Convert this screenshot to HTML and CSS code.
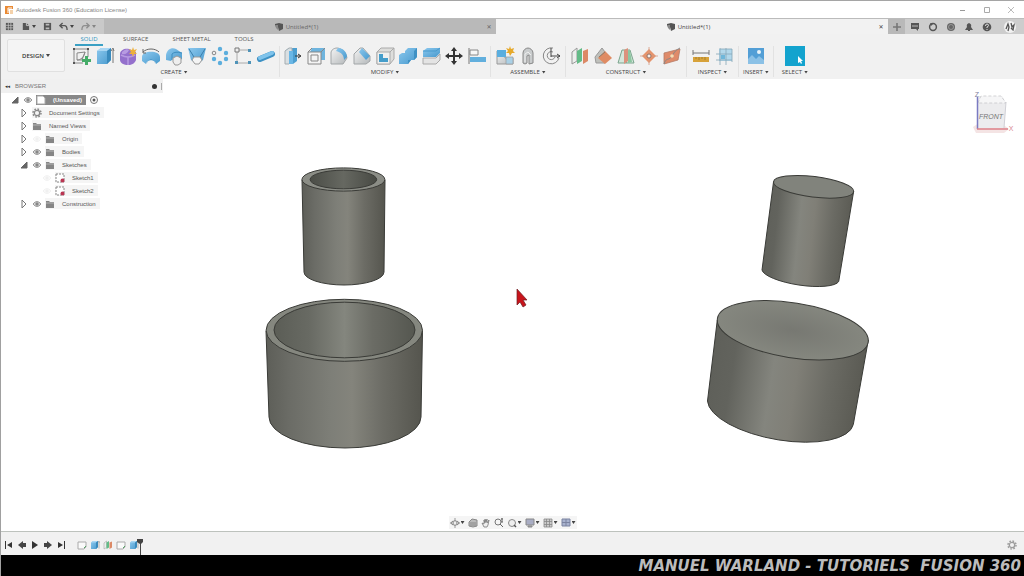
FILE: index.html
```html
<!DOCTYPE html>
<html lang="en">
<head>
<meta charset="utf-8">
<title>Autodesk Fusion 360 (Education License)</title>
<link rel="stylesheet" href="styles.css">
</head>
<body>
<svg class="defs" aria-hidden="true">
  <defs>
    <linearGradient id="blue" x1="0" x2="1" y1="0" y2="1"><stop offset="0" stop-color="#8cc8ee"/><stop offset="1" stop-color="#4799cd"/></linearGradient>
    <linearGradient id="grey" x1="0" x2="1" y1="0" y2="1"><stop offset="0" stop-color="#f4f4f4"/><stop offset="1" stop-color="#b4b8ba"/></linearGradient>
  </defs>
  <symbol id="sketch" viewBox="0 0 20 20"><path d="M2 3h14v8M2 3v14h9M5 14V7l8-1-3 8zM5 14c4 0 7-3 8-8" fill="none" stroke="#888"/><path d="M1 2h2v2H1zM15 2h2v2h-2zM1 16h2v2H1z" fill="#555"/><path d="M13 10h3v3h3v3h-3v3h-3v-3h-3v-3h3z" fill="#45ac68"/></symbol>
  <symbol id="extrude" viewBox="0 0 20 20"><path d="M2 5l4-3h10v12l-4 4H2z" fill="url(#blue)"/><path d="M2 5l4-3h10l-4 3z" fill="#a8d6f3"/><path d="M12 5l4-3v12l-4 4z" fill="#398abd"/><path d="M18 17V4M16 5l2-3 1 3" stroke="#777" fill="none"/></symbol>
  <symbol id="form" viewBox="0 0 20 20"><path d="M2 8c0-4 5-6 9-5l7 3v8c-1 3-4 5-8 5s-8-2-8-5z" fill="#9470cc"/><path d="M3 9q7 4 14 0M10 11v8" fill="none" stroke="#b79be2" stroke-width="1.500"/><path d="M4 6q4-4 7-2-2 5-7 4z" fill="#b79be2"/><path d="M15 1l1 3 3-1-2 3 2 2-3 0-1 3-1-3-3 0 2-2-2-3 3 1z" fill="#edb03b"/></symbol>
  <symbol id="revolve" viewBox="0 0 20 20"><path d="M1 11c0-7 18-7 18 0v4l-4 3c-1-5-9-5-10 0l-4-3z" fill="url(#blue)"/><path d="M5 18q5-9 10 0l-3-4H8z" fill="#3686b8"/><path d="M2 6c4-4 12-4 16 0M2 3v4h3" fill="none" stroke="#666"/></symbol>
  <symbol id="sweep" viewBox="0 0 20 20"><path d="M2 9c1-5 5-8 10-6l6 4v6l-4 2-5-3-2 3-5-1z" fill="url(#blue)"/><path d="M8 8q3-3 10-1M8 8v6" fill="none" stroke="#3d8dbf"/><path d="M9 12l4-2 4 2v5l-3 2h-3l-2-3z" fill="#eee" stroke="#999"/></symbol>
  <symbol id="loft" viewBox="0 0 20 20"><path d="M1 2h18l-3 12-6 4-6-4z" fill="url(#blue)"/><path d="M2 3l5 8M18 3l-5 8" stroke="#397fad"/><path d="M7 11h6l2 3-3 4H8l-3-4z" fill="#f4f4f4" stroke="#999"/></symbol>
  <symbol id="pattern" viewBox="0 0 20 20"><g fill="#5caedd"><circle cx="10" cy="3" r="2.200"/><circle cx="16" cy="7" r="2.200"/><circle cx="16" cy="13" r="2.200"/><circle cx="10" cy="17" r="2.200"/><circle cx="4" cy="13" r="2.200"/></g><circle cx="4" cy="7" r="1.800" fill="#eee" stroke="#888"/></symbol>
  <symbol id="corners" viewBox="0 0 20 20"><path d="M4 4h13M4 4v13h13" fill="none" stroke="#aaa"/><path d="M2 2h4v4H2z" fill="#eee" stroke="#777"/><path d="M15 3h3v3h-3zM15 15h3v3h-3zM2 15h3v3H2z" fill="#4f93b8"/></symbol>
  <symbol id="pipe" viewBox="0 0 20 20"><path d="M4 13L16 8" stroke="#3d91c4" stroke-width="6" stroke-linecap="round"/><path d="M4 12L16 7" stroke="#7fc3eb" stroke-width="4" stroke-linecap="round"/></symbol>
  <symbol id="press" viewBox="0 0 20 20"><path d="M2 5l4-3h8v13l-4 3H2z" fill="#4d9fd0"/><path d="M2 5l4-3h3v13l-3 3H2z" fill="#d9dfe2" stroke="#a5adb1"/><path d="M6 5h4v13H6z" fill="#6ab7e6"/><path d="M12 10h5M15 8l3 2-3 2" stroke="#333" fill="none"/></symbol>
  <symbol id="shell" viewBox="0 0 20 20"><path d="M6 2h13v12h-4V6H4z" fill="#6eb4de"/><path d="M2 6h13v12H2zM5 9h7v6H5z" fill="#f4f4f4" stroke="#888"/><path d="M2 6l4-4M15 6l4-4" stroke="#888"/></symbol>
  <symbol id="fillet" viewBox="0 0 20 20"><path d="M2 7c0-3 3-5 6-5s9 3 10 10l-4 6H2z" fill="url(#grey)" stroke="#a2a6a8"/><path d="M9 2c5 0 9 4 9 9l-3 3c0-5-3-8-8-9z" fill="url(#blue)"/></symbol>
  <symbol id="chamfer" viewBox="0 0 20 20"><path d="M2 8l6-6h3l7 8v5l-4 3H2z" fill="url(#grey)" stroke="#a2a6a8"/><path d="M10 2l8 8-4 4-7-8z" fill="url(#blue)"/></symbol>
  <symbol id="hollow" viewBox="0 0 20 20"><path d="M2 6l4-4h13v11l-4 5H2z" fill="#dededc" stroke="#aaa"/><path d="M2 6h13v12H2zM15 6l4-4" fill="#f0f0ef" stroke="#aaa"/><path d="M4 8h4v4h5v4H4z" fill="#459dca"/></symbol>
  <symbol id="combine" viewBox="0 0 20 20"><path d="M7 5l3-3h9v9l-3 3h-3l-3 4H1V9l3-2h3z" fill="url(#blue)"/><path d="M16 5v9l3-3V2zM10 14h3l-3 4z" fill="#3f91c4"/></symbol>
  <symbol id="split" viewBox="0 0 20 20"><path d="M2 5l4-3h13v5l-4 4H2z" fill="url(#blue)"/><path d="M2 12h13l4-4v6l-4 4H2z" fill="#e4e4e4" stroke="#aaa"/><path d="M2 5h13l4-3" stroke="#4799cd" fill="none"/></symbol>
  <symbol id="move" viewBox="0 0 20 20"><path d="M10 1l3 4h-2v4h4V7l4 3-4 3v-2h-4v4h2l-3 4-3-4h2v-4H5v2l-4-3 4-3v2h4V5H7z" fill="#333"/></symbol>
  <symbol id="align" viewBox="0 0 20 20"><path d="M2 2v16" stroke="#777"/><path d="M3 4h8v5H3z" fill="#f7f7f7" stroke="#888"/><path d="M3 11h16v5H3z" fill="#62afdd"/></symbol>
  <symbol id="component" viewBox="0 0 20 20"><path d="M2 5h8v7h8v6H2z" fill="url(#grey)" stroke="#999"/><path d="M2 4h9v7H2z" fill="#5aaedf"/><path d="M11 11h7v7h-7z" fill="#a9d0e6" stroke="#999" stroke-width=".7"/><path d="M15 0l1 3 3-1-1 3 2 2-3 0-2 3-1-3-3 0 2-2-2-3 3 1z" fill="#e6a92b"/></symbol>
  <symbol id="joint" viewBox="0 0 20 20"><path d="M5 17V7c0-3 3-5 5-5s5 2 5 5v10l-4 1V9l-2 1v7l-2 1z" fill="#c9cccd" stroke="#888"/><path d="M7 16V8l3-2 3 3" fill="none" stroke="#eee"/></symbol>
  <symbol id="joinorigin" viewBox="0 0 20 20"><path d="M12 2A8 8 0 1 0 18 12M12 6A4 4 0 1 0 14 11" fill="none" stroke="#888"/><path d="M10 10h9M10 2v9M16 8l3 2-3 2" fill="none" stroke="#444"/></symbol>
  <symbol id="offset" viewBox="0 0 20 20"><path d="M2 6l5-4v13l-5 3z" fill="#ecefed" stroke="#999"/><path d="M7 5l5-3v13l-5 3z" fill="#63bb87"/><path d="M13 5l5-2v12l-5 3z" fill="#dc8966"/></symbol>
  <symbol id="angle" viewBox="0 0 20 20"><path d="M2 11L9 2l3 4v11H3z" fill="#bfc0bb" stroke="#999"/><path d="M12 5l7 7-7 6-7-6z" fill="#df8b63"/><path d="M6 11l6-5" stroke="#8b7b6a"/></symbol>
  <symbol id="midplane" viewBox="0 0 20 20"><path d="M2 17L6 4h4v13zM18 17L14 4h-4v13z" fill="#d5e7db" stroke="#7ba58e"/><path d="M8 4l4-2v13l-4 3z" fill="#dc927d"/><path d="M12 4l2 1 2 11-4 1z" fill="#8cc7a1"/></symbol>
  <symbol id="point" viewBox="0 0 20 20"><path d="M10 3l7 7-7 7-7-7z" fill="#e5936c"/><path d="M10 1v18M1 10h18" stroke="#d69a80" stroke-width=".8"/><circle cx="10" cy="10" r="2" fill="#f7eee9" stroke="#7c625a" stroke-width=".8"/></symbol>
  <symbol id="pathplane" viewBox="0 0 20 20"><path d="M2 7l16-4-2 11-14 4z" fill="#df8b6a" stroke="#b57b66" stroke-width=".8"/><path d="M2 18c2-7 5-3 8-8s4-6 8-8" fill="none" stroke="#888"/><circle cx="10" cy="10" r="1.800" fill="#f4ddb4"/></symbol>
  <symbol id="measure" viewBox="0 0 20 20"><path d="M2 11h16v5H2z" fill="#d7a23a"/><path d="M2 4v5M18 4v5M2 7h16" fill="none" stroke="#777"/><path d="M5 11v2M8 11v3M11 11v2M14 11v3" stroke="#a67e2c"/></symbol>
  <symbol id="interference" viewBox="0 0 20 20"><path d="M5 3h13v12H5z" fill="#b2d8eb"/><path d="M2 8h16M2 14h16M6 2v17M12 2v17M6 3h12v13" fill="none" stroke="#86a7b7" stroke-width=".8"/><path d="M7 9h4v4H7z" fill="#6fb7da"/></symbol>
  <symbol id="image" viewBox="0 0 20 20"><path d="M2 2h16v16H2z" fill="#539fd6"/><path d="M2 13l4-4 4 4 3-3 5 4v4H2z" fill="#8bc1e6"/><circle cx="13" cy="6" r="2" fill="#e9f4fa"/></symbol>
  <symbol id="select" viewBox="0 0 20 20"><path d="M0 0h20v20H0z" fill="#13a3ce"/><path d="M13 10v7l2-1 1 2 1-1-1-2h2z" fill="#fff"/></symbol>
  <symbol id="folder" viewBox="0 0 10 10"><path d="M1 2h3l1 1h4v6H1z" fill="#858585"/><path d="M1 4h8" stroke="#b5b5b5"/></symbol>
  <symbol id="eye" viewBox="0 0 10 10"><path d="M1 5q4-5 8 0-4 5-8 0z" fill="#ddd" stroke="#999"/><circle cx="5" cy="5" r="1.700" fill="#888"/></symbol>
  <symbol id="gear" viewBox="0 0 10 10"><circle cx="5" cy="5" r="4" fill="none" stroke="#888" stroke-dasharray="1.600 1.540" stroke-width="1.500"/><circle cx="5" cy="5" r="2.700" fill="none" stroke="#888" stroke-width="1.300"/></symbol>
  <symbol id="closed" viewBox="0 0 10 10"><path d="M3 1l4 4-4 4z" fill="#fff" stroke="#777"/></symbol>
  <symbol id="open" viewBox="0 0 10 10"><path d="M2 8l6-6v6z" fill="#666" stroke="#666"/></symbol>
  <symbol id="sketchitem" viewBox="0 0 10 10"><path d="M1 1h8v8H1z" fill="#fff" stroke="#888" stroke-dasharray="2 1"/><circle cx="7.500" cy="7.500" r="2" fill="#ba3653"/></symbol>
  <symbol id="cube" viewBox="0 0 10 10"><path d="M1 2l4-1 4 1v5L5 9 4 5 1 4z" fill="#555"/><path d="M1 3h3v5L2 6z" fill="#888"/></symbol>
  <symbol id="sketchbox" viewBox="0 0 10 10"><path d="M1 2h8v5L7 9H1z" fill="#fafafa" stroke="#aaa"/><path d="M7 8l2-2" stroke="#57a668"/></symbol>
</svg>

<div class="app">
  <header class="title">
    <svg class="ic10" viewBox="0 0 10 10"><path d="M1 1h8v3H5v5H1z" fill="#e98a35"/><path d="M4 3h4M4 3v5M4 5h3" stroke="#fff"/><path d="M6 5h3v4H6z" fill="#f4d1aa"/></svg>
    <span class="title-text">Autodesk Fusion 360 (Education License)</span>
    <button class="win" aria-label="Minimize"><svg class="ic10" viewBox="0 0 10 10"><path d="M2 5.500h5" stroke="#999"/></svg></button>
    <button class="win" aria-label="Maximize"><svg class="ic10" viewBox="0 0 10 10"><path d="M2.500 2.500h5v5h-5z" fill="none" stroke="#aaa"/></svg></button>
    <button class="win" aria-label="Close window"><svg class="ic10" viewBox="0 0 10 10"><path d="M2 2l6 6M8 2L2 8" stroke="#aaa" stroke-width=".8"/></svg></button>
  </header>

  <div class="tabs">
    <div class="quick">
      <button aria-label="Data panel"><svg class="ic10" viewBox="0 0 10 10"><path d="M1 1h8v8H1z" fill="#555"/><path d="M3.700 1v8M6.500 1v8M1 3.700h8M1 6.500h8" stroke="#c9c9c9" stroke-width=".8"/></svg></button>
      <button aria-label="File"><svg class="ic10" viewBox="0 0 10 10"><path d="M2 1h4l3 3v5H2z" fill="#555"/><path d="M6 1v3h3" stroke="#ccc" fill="none"/></svg><i class="caret"></i></button>
      <button aria-label="Save"><svg class="ic10" viewBox="0 0 10 10"><path d="M1 1h8v8H1z" fill="#555"/><path d="M3 2h4v2H3zM3 6h4v2H3z" fill="#bbb"/></svg></button>
      <button aria-label="Undo"><svg class="ic10" viewBox="0 0 10 10"><path d="M4 1L1 4l3 3M1 4h5q3 0 3 5" fill="none" stroke="#555" stroke-width="1.500"/></svg><i class="caret"></i></button>
      <button class="off" aria-label="Redo"><svg class="ic10" viewBox="0 0 10 10"><path d="M6 1l3 3-3 3M9 4H4Q1 4 1 9" fill="none" stroke="#555" stroke-width="1.500"/></svg><i class="caret"></i></button>
    </div>
    <div class="tab"><button class="tab-name"><svg class="ic10"><use href="#cube"/></svg>Untitled*(1)</button><button class="close" aria-label="Close tab">✕</button></div>
    <div class="tab active"><button class="tab-name"><svg class="ic10"><use href="#cube"/></svg>Untitled*(1)</button><button class="close" aria-label="Close tab">✕</button></div>
    <button class="plus" aria-label="New design"><svg class="ic10" viewBox="0 0 10 10"><path d="M5 1v8M1 5h8" stroke="#777" stroke-width="1.600"/></svg></button>
    <div class="status">
      <button aria-label="Extensions"><svg class="ic10" viewBox="0 0 10 10"><path d="M1 1h8v6H8v2L6 7H1z" fill="#555"/><path d="M2 4h6" stroke="#bbb"/></svg></button>
      <button aria-label="Updates"><svg class="ic10" viewBox="0 0 10 10"><circle cx="5" cy="5" r="3.400" fill="none" stroke="#555" stroke-width="1.500"/><path d="M2 1l3 1-2 2z" fill="#555"/></svg></button>
      <button aria-label="Job status"><svg class="ic10" viewBox="0 0 10 10"><circle cx="5" cy="5" r="4" fill="#666"/><circle cx="5" cy="5" r="2.500" fill="none" stroke="#aaa" stroke-width=".7"/></svg></button>
      <button aria-label="Notifications"><svg class="ic10" viewBox="0 0 10 10"><path d="M5 1q3 1 2 4l2 3H1l2-3Q2 2 5 1zM4 8h2v1H4z" fill="#555"/></svg></button>
      <button aria-label="Help"><svg class="ic10" viewBox="0 0 10 10"><circle cx="5" cy="5" r="4.300" fill="#555"/><path d="M3.500 4q0-2 1.500-2t1.500 1.500Q6.500 4.500 5 5v1M5 7v1" fill="none" stroke="#ddd"/></svg></button>
      <button class="avatar" aria-label="Account"><svg class="ic12" viewBox="0 0 12 12"><circle cx="6" cy="6" r="6" fill="#f2f2f2"/><path d="M2 8l2-5 1 3-1 4M7 2l1 4 2-2-1 5-2-2" stroke="#555" fill="none" stroke-width="1.300"/></svg></button>
    </div>
  </div>

  <div class="toolbar">
    <button class="workspace">DESIGN<i class="caret"></i></button>
    <div class="ribbon">
      <nav class="modes"><button class="on">SOLID</button><button>SURFACE</button><button>SHEET METAL</button><button>TOOLS</button></nav>
      <div class="groups">
        <section class="group wide"><div class="icons">
          <button aria-label="Create sketch"><svg><use href="#sketch"/></svg></button><button aria-label="Extrude"><svg><use href="#extrude"/></svg></button><button aria-label="Create form"><svg><use href="#form"/></svg></button><button aria-label="Revolve"><svg><use href="#revolve"/></svg></button><button aria-label="Sweep"><svg><use href="#sweep"/></svg></button><button aria-label="Loft"><svg><use href="#loft"/></svg></button><button aria-label="Circular pattern"><svg><use href="#pattern"/></svg></button><button aria-label="Rectangular pattern"><svg><use href="#corners"/></svg></button><button aria-label="Pipe"><svg><use href="#pipe"/></svg></button>
        </div><button class="menu">CREATE<i class="caret"></i></button></section>
        <section class="group wide"><div class="icons">
          <button aria-label="Press pull"><svg><use href="#press"/></svg></button><button aria-label="Offset face"><svg><use href="#shell"/></svg></button><button aria-label="Fillet"><svg><use href="#fillet"/></svg></button><button aria-label="Chamfer"><svg><use href="#chamfer"/></svg></button><button aria-label="Shell"><svg><use href="#hollow"/></svg></button><button aria-label="Combine"><svg><use href="#combine"/></svg></button><button aria-label="Split body"><svg><use href="#split"/></svg></button><button aria-label="Move"><svg><use href="#move"/></svg></button><button aria-label="Align"><svg><use href="#align"/></svg></button>
        </div><button class="menu">MODIFY<i class="caret"></i></button></section>
        <section class="group"><div class="icons">
          <button aria-label="New component"><svg><use href="#component"/></svg></button><button aria-label="Joint"><svg><use href="#joint"/></svg></button><button aria-label="Joint origin"><svg><use href="#joinorigin"/></svg></button>
        </div><button class="menu">ASSEMBLE<i class="caret"></i></button></section>
        <section class="group"><div class="icons">
          <button aria-label="Offset plane"><svg><use href="#offset"/></svg></button><button aria-label="Plane at angle"><svg><use href="#angle"/></svg></button><button aria-label="Midplane"><svg><use href="#midplane"/></svg></button><button aria-label="Point"><svg><use href="#point"/></svg></button><button aria-label="Plane along path"><svg><use href="#pathplane"/></svg></button>
        </div><button class="menu">CONSTRUCT<i class="caret"></i></button></section>
        <section class="group"><div class="icons"><button aria-label="Measure"><svg><use href="#measure"/></svg></button><button aria-label="Interference"><svg><use href="#interference"/></svg></button></div><button class="menu">INSPECT<i class="caret"></i></button></section>
        <section class="group"><div class="icons"><button aria-label="Insert image"><svg><use href="#image"/></svg></button></div><button class="menu">INSERT<i class="caret"></i></button></section>
        <section class="group last"><div class="icons"><button aria-label="Select"><svg><use href="#select"/></svg></button></div><button class="menu">SELECT<i class="caret"></i></button></section>
      </div>
    </div>
  </div>

  <main class="view">
    <svg class="scene" viewBox="1 79 1023 452" role="img" aria-label="Two hollow and two solid cylinders">
      <defs>
        <linearGradient id="side"><stop offset="0" stop-color="#5d5e58"/><stop offset=".15" stop-color="#6b6c66"/><stop offset=".42" stop-color="#7e7f78"/><stop offset=".55" stop-color="#84847c"/><stop offset=".75" stop-color="#6c6c65"/><stop offset="1" stop-color="#55554e"/></linearGradient>
        <linearGradient id="tilted" x1="0" x2="1" y1="0" y2=".12"><stop offset="0" stop-color="#5d5e58"/><stop offset=".2" stop-color="#62635d"/><stop offset=".45" stop-color="#84857e"/><stop offset=".6" stop-color="#807f77"/><stop offset=".8" stop-color="#6b6b64"/><stop offset="1" stop-color="#5b5b54"/></linearGradient>
        <linearGradient id="inside"><stop offset="0" stop-color="#5b5d56"/><stop offset=".25" stop-color="#686a63"/><stop offset=".5" stop-color="#84867e"/><stop offset=".7" stop-color="#6b6c65"/><stop offset="1" stop-color="#555750"/></linearGradient>
        <linearGradient id="deep"><stop offset="0" stop-color="#4b4d47"/><stop offset=".5" stop-color="#666861"/><stop offset="1" stop-color="#484a44"/></linearGradient>
        <radialGradient id="cap"><stop offset="0" stop-color="#777872"/><stop offset="1" stop-color="#85877f"/></radialGradient>
      </defs>
      <g stroke="#3a3b37" stroke-width="1">
        <path d="M302 180L304 272A40 13 0 0 0 384 272L385 180z" fill="url(#side)"/>
        <ellipse cx="343.400" cy="179.500" rx="41.500" ry="11.600" fill="#8b8d86"/>
        <ellipse cx="343.400" cy="179.500" rx="33.300" ry="9.300" fill="url(#deep)"/>
        <path d="M266 331L269 417A76 31 0 0 0 421 417L422.500 331z" fill="url(#side)"/>
        <ellipse cx="344.300" cy="330.300" rx="78.200" ry="31" fill="#85877f"/>
        <ellipse cx="344.500" cy="330" rx="70.500" ry="27.800" fill="url(#inside)"/>
        <path d="M773.500 182L762 270A39 10.500 8.500 0 0 838.700 281.500L853.700 191z" fill="url(#tilted)"/>
        <ellipse cx="813.600" cy="186.800" rx="40.400" ry="10.300" transform="rotate(7 813.600 186.800)" fill="#81837c"/>
        <path d="M717.300 320L707.500 401A74 28.700 10 0 0 853.300 424.500L868.300 340z" fill="url(#tilted)"/>
        <ellipse cx="792.800" cy="330.300" rx="76.300" ry="27.500" transform="rotate(9 792.800 330.300)" fill="url(#cap)"/>
      </g>
      <path d="M517 289v16l3-3 3 5 3-2-3-5h4z" fill="#c8141b" stroke="#6d2025" stroke-width=".7"/>
      <path d="M973 127l6-4 26 3 4 3-5 4h-28z" fill="#f4e4e4"/>
      <path d="M977 103l2-7 23 0 4 7-2 25-27 1z" fill="#ececee"/>
      <path d="M978 103l3-7h20l5 7z" fill="#f6f6f7" stroke="#c2c2c4" stroke-width=".7" stroke-dasharray="3 2"/>
      <path d="M1006 102l-2 26" fill="none" stroke="#d0d0d6"/>
      <path d="M977.500 97v32" stroke="#7a7ac2" stroke-width="1.500"/><path d="M977 129h31" stroke="#dd8088" stroke-width="1.500"/>
      <text class="cube-face" x="991" y="119" text-anchor="middle">FRONT</text>
      <text class="axis-z" x="977" y="97" text-anchor="middle">Z</text><text class="axis-x" x="1011" y="131" text-anchor="middle">X</text>
    </svg>

    <aside class="browser">
      <div class="browser-head"><span class="rewind">◂◂</span><span class="browser-title">BROWSER</span><span class="dot"></span><span class="grip"></span></div>
      <ul class="tree">
        <li class="l0"><button aria-label="Collapse"><svg class="ic10"><use href="#open"/></svg></button><svg class="ic10"><use href="#eye"/></svg><span class="label root"><svg class="ic10" viewBox="0 0 10 10"><path d="M1 1h6l2 2v6H1z" fill="#fff" stroke="#aaa"/></svg>(Unsaved)</span><svg class="ic10" viewBox="0 0 10 10"><circle cx="5" cy="5" r="3.500" fill="#fff" stroke="#777"/><circle cx="5" cy="5" r="1.500" fill="#555"/></svg></li>
        <li class="l1"><button aria-label="Expand"><svg class="ic10"><use href="#closed"/></svg></button><span class="label"><svg class="ic10"><use href="#gear"/></svg>Document Settings</span></li>
        <li class="l1"><button aria-label="Expand"><svg class="ic10"><use href="#closed"/></svg></button><span class="label"><svg class="ic10"><use href="#folder"/></svg>Named Views</span></li>
        <li class="l1"><button aria-label="Expand"><svg class="ic10"><use href="#closed"/></svg></button><svg class="ic10 faint"><use href="#eye"/></svg><span class="label"><svg class="ic10"><use href="#folder"/></svg>Origin</span></li>
        <li class="l1"><button aria-label="Expand"><svg class="ic10"><use href="#closed"/></svg></button><svg class="ic10"><use href="#eye"/></svg><span class="label"><svg class="ic10"><use href="#folder"/></svg>Bodies</span></li>
        <li class="l1"><button aria-label="Collapse"><svg class="ic10"><use href="#open"/></svg></button><svg class="ic10"><use href="#eye"/></svg><span class="label"><svg class="ic10"><use href="#folder"/></svg>Sketches</span></li>
        <li class="l2"><svg class="ic10 faint"><use href="#eye"/></svg><span class="label"><svg class="ic10"><use href="#sketchitem"/></svg>Sketch1</span></li>
        <li class="l2"><svg class="ic10 faint"><use href="#eye"/></svg><span class="label"><svg class="ic10"><use href="#sketchitem"/></svg>Sketch2</span></li>
        <li class="l1"><button aria-label="Expand"><svg class="ic10"><use href="#closed"/></svg></button><svg class="ic10"><use href="#eye"/></svg><span class="label"><svg class="ic10"><use href="#folder"/></svg>Construction</span></li>
      </ul>
    </aside>

    <div class="navbar">
      <button aria-label="Orbit"><svg class="ic10" viewBox="0 0 10 10"><path d="M5 0v10M0 5h10" stroke="#999"/><ellipse cx="5" cy="5" rx="4" ry="2" fill="none" stroke="#888"/><path d="M5 2l2 3-2 3-2-3z" fill="#eee" stroke="#888" stroke-width=".7"/></svg><i class="caret"></i></button>
      <button aria-label="Look at"><svg class="ic10" viewBox="0 0 10 10"><path d="M1 4l3-3 5 1v6l-4 1-4-1z" fill="#bbb" stroke="#888"/><path d="M2 5h6M2 7h6" stroke="#888"/></svg></button>
      <button aria-label="Pan"><svg class="ic10" viewBox="0 0 10 10"><path d="M3 9L1 5l2 1V2l1 3V1l1 3 1-3v4l2-3-1 5-1 2z" fill="#eee" stroke="#777" stroke-width=".8"/></svg></button>
      <button aria-label="Zoom"><svg class="ic10" viewBox="0 0 10 10"><circle cx="4" cy="4" r="3" fill="none" stroke="#777"/><path d="M6 6l3 3M8 0v4M7 1h2M7 4h2" stroke="#666"/></svg></button>
      <button aria-label="Fit"><svg class="ic10" viewBox="0 0 10 10"><circle cx="5" cy="5" r="3.500" fill="#eee" stroke="#888"/><path d="M7 7l2 2" stroke="#555" stroke-width="1.500"/></svg><i class="caret"></i></button>
      <button aria-label="Display settings"><svg class="ic10" viewBox="0 0 10 10"><path d="M1 1h8v6H1zM3 8h4v1H3z" fill="#a9adc4" stroke="#888"/></svg><i class="caret"></i></button>
      <button aria-label="Grid and snaps"><svg class="ic10" viewBox="0 0 10 10"><path d="M1 1h8v8H1zM3.500 1v8M6.500 1v8M1 3.500h8M1 6.500h8" fill="#ccc" stroke="#888" stroke-width=".8"/></svg><i class="caret"></i></button>
      <button aria-label="Viewports"><svg class="ic10" viewBox="0 0 10 10"><path d="M1 1h8v7H1zM5 1v7M1 4.500h8" fill="#a8b2ce" stroke="#7b83a0"/></svg><i class="caret"></i></button>
    </div>
  </main>

  <footer class="timeline">
    <div class="player">
      <button aria-label="Go to start"><svg class="ic10" viewBox="0 0 10 10"><path d="M1 1h1v8H1zM8 2v6L3 5z" fill="#333"/></svg></button>
      <button aria-label="Step back"><svg class="ic10" viewBox="0 0 10 10"><path d="M6 1v8L1 5zM6 3h3v4H6z" fill="#444"/></svg></button>
      <button aria-label="Play"><svg class="ic10" viewBox="0 0 10 10"><path d="M2 1l6 4-6 4z" fill="#333"/></svg></button>
      <button aria-label="Step forward"><svg class="ic10" viewBox="0 0 10 10"><path d="M4 1v8l5-4zM1 3h3v4H1z" fill="#444"/></svg></button>
      <button aria-label="Go to end"><svg class="ic10" viewBox="0 0 10 10"><path d="M8 1h1v8H8zM2 2v6l5-3z" fill="#333"/></svg></button>
    </div>
    <div class="history">
      <button aria-label="Sketch1"><svg class="ic10"><use href="#sketchbox"/></svg></button><button aria-label="Extrude1"><svg class="ic10"><use href="#extrude"/></svg></button><button aria-label="Plane1"><svg class="ic10"><use href="#offset"/></svg></button><button aria-label="Sketch2"><svg class="ic10"><use href="#sketchbox"/></svg></button><button aria-label="Extrude2"><svg class="ic10"><use href="#extrude"/></svg></button>
    </div>
    <svg class="marker" viewBox="0 0 8 17"><path d="M1 1h6v3L5 6v11H4V6L1 4z" fill="#444"/></svg>
    <button class="settings" aria-label="Timeline settings"><svg class="ic10"><use href="#gear"/></svg></button>
  </footer>
  <div class="credit">MANUEL WARLAND - TUTORIELS&nbsp; FUSION 360</div>
</div>
</body>
</html>
```
FILE: styles.css
```css
* { box-sizing: border-box; }
body { margin: 0; background: #fff; color: #555; font: 6px/8px "Open Sans", "Noto Sans", sans-serif; }
button { margin: 0; padding: 0; border: 0; background: none; color: inherit; font: inherit; display: flex; align-items: center; justify-content: center; }
svg { display: block; flex: none; }
.defs { position: absolute; width: 0; height: 0; }
.ic10 { width: 10px; height: 10px; }
.ic12 { width: 12px; height: 12px; }
.caret { flex: none; width: 4px; height: 3px; margin-left: 2px; background: #444; clip-path: polygon(0 0, 100% 0, 50% 100%); }

.app { min-height: 100vh; display: flex; flex-direction: column; border-top: 1px solid #a5a5a5; border-left: 1px solid #a0a0a0; }

.title { flex: none; display: flex; align-items: center; height: 17px; padding: 0 8px 0 3px; background: #fff; color: #858585; font-family: "Liberation Sans", Arial, sans-serif; }
.title-text { flex: 1; margin-left: 2px; }
.win { width: 10px; margin-left: 14px; }

.tabs { flex: none; display: flex; height: 16px; background: #cdcdcd; border-top: 1px solid #bbb; }
.quick { display: flex; align-items: center; gap: 7px; width: 103px; padding-left: 4px; background: #c9c9c9; }
.quick .caret { margin-left: 2px; }
.quick .ic10 { width: 9px; height: 9px; }
.off { opacity: .5; }
.tab { flex: 1; display: flex; align-items: center; background: #b9b9b9; color: #666; }
.tab-name { flex: 1; gap: 2px; padding-left: 6px; }
.close { width: 14px; font: 6px/8px "DejaVu Sans", sans-serif; }
.active { background: #f2f2f2; color: #444; }
.plus { width: 17px; background: #b9b9b9; }
.status { display: flex; align-items: center; gap: 8px; width: 119px; padding-left: 5px; }
.avatar { margin-left: 4px; }

.toolbar { flex: none; display: flex; height: 45px; background: #f1f1f1; color: #555; }
.workspace { width: 58px; height: 33px; margin: 5px 4px 0 6px; border: 1px solid #e0e0e0; border-radius: 2px; background: #f4f4f4; color: #333; font-weight: 600; }
.ribbon { flex: 1; }
.modes { display: flex; gap: 24px; height: 12px; padding-left: 6px; }
.modes button { border-bottom: 2px solid transparent; }
.modes .on { width: 28px; margin-right: -4px; color: #2b93bd; border-color: #3aa0c4; }
.groups { display: flex; }
.group { display: flex; flex-direction: column; align-items: center; gap: 1px; padding: 0 4px; border-right: 1px solid #e2e2e2; }
.group.wide { padding: 0 3px; }
.group.last { padding: 0 8px; border: 0; }
.icons { display: flex; gap: 3px; }
.icons svg { width: 20px; height: 20px; }
.menu { height: 10px; color: #444; }

.view { position: relative; flex: 1; min-height: 0; background: #fff; }
.scene { position: absolute; inset: 0; width: 100%; height: 100%; }
.cube-face { font: italic 7px "Liberation Sans", sans-serif; fill: #777; }
.axis-z { font: 7px "Liberation Sans", sans-serif; fill: #8080a0; }
.axis-x { font: 7px "Liberation Sans", sans-serif; fill: #d88790; }

.browser { position: relative; width: 162px; font: 6px/8px "Liberation Sans", Arial, sans-serif; }
.browser-head { display: flex; align-items: center; height: 14px; padding: 0 1px 0 4px; background: #f0f0f0; color: #777; }
.rewind { width: 10px; color: #333; font: 5px/8px "DejaVu Sans", sans-serif; }
.browser-title { flex: 1; }
.dot { width: 5px; height: 5px; border-radius: 50%; background: #333; }
.grip { width: 1px; height: 7px; margin-left: 4px; background: #aaa; }
.tree { margin: 0; padding: 0; list-style: none; }
.tree li { display: flex; align-items: center; gap: 3px; height: 13px; }
.l0 { padding-left: 9px; }
.l1 { padding-left: 18px; }
.l2 { padding-left: 41px; }
.label { display: flex; align-items: center; gap: 7px; height: 11px; padding-right: 4px; background: #f5f5f5; color: #555; }
.root { height: 10px; background: #888; color: #fff; font-weight: 700; }
.faint { opacity: .12; }

.navbar { position: absolute; left: 50%; bottom: 2px; transform: translateX(-50%); display: flex; align-items: center; gap: 3px; height: 13px; padding: 0 1px; background: #f5f5f5; }
.navbar .caret { margin-left: 1px; }

.timeline { flex: none; display: flex; align-items: center; height: 24px; padding: 2px 7px 0 3px; background: #f1f1f1; border-top: 1px solid #bdc2bd; }
.player { display: flex; gap: 3px; }
.history { display: flex; gap: 3px; margin-left: 11px; }
.marker { width: 8px; height: 17px; margin-left: -3px; align-self: flex-end; }
.settings { margin-left: auto; opacity: .8; }

.credit { flex: none; height: 21px; padding-right: 3px; background: #000; color: #bcbcbc; text-align: right; white-space: nowrap; font: italic bold 15px/23px "DejaVu Sans", sans-serif; }
```
